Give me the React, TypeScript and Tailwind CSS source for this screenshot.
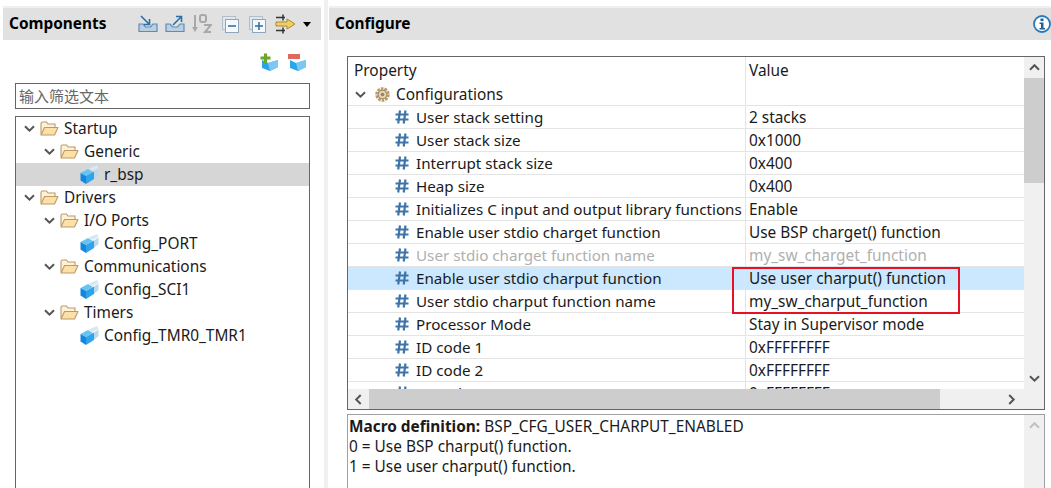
const uiFont = "font-['Noto_Sans','Noto_Sans_CJK_SC',sans-serif]";

const Chevron = ({ dir = "down", color = "#555" }: { dir?: "down" | "up" | "left" | "right"; color?: string }) => {
  const paths = {
    down: "M1 3.2 L5.5 7.7 L10 3.2",
    up: "M1 7.7 L5.5 3.2 L10 7.7",
    left: "M7.7 1 L3.2 5.5 L7.7 10",
    right: "M3.2 1 L7.7 5.5 L3.2 10",
  };
  return (
    <svg width="11" height="11" viewBox="0 0 11 11" className="shrink-0">
      <path d={paths[dir]} fill="none" stroke={color} strokeWidth="2" />
    </svg>
  );
};

const Folder = () => (
  <svg width="19" height="15" viewBox="0 0 19 15" className="shrink-0">
    <path d="M1 13 V2.5 Q1 1 2.5 1 H6.5 L8 3 H15 V6" fill="#fdf1d8" stroke="#bd9a66" strokeWidth="1.1" />
    <path d="M1 14 L4.5 6.5 H18 L14.5 14 Z" fill="#fbe0a8" stroke="#bd9a66" strokeWidth="1.1" strokeLinejoin="round" />
  </svg>
);

const Cube = () => (
  <svg width="19" height="19" viewBox="0 0 19 19" className="shrink-0">
    <path d="M0.5 8 L8 4 L13 7 L6 11 Z" fill="#66c4f2" />
    <path d="M0.5 8 L6 11 V19 L0.5 15.5 Z" fill="#1487dd" />
    <path d="M6 11 L14 6.5 V14 L6 19 Z" fill="#2fa3ec" />
    <path d="M8.5 3.5 L17 0 L18.5 3 L12.5 6 Z" fill="#d8e8f3" />
    <path d="M14 6.5 L18.5 3.5 V10 L14 14 Z" fill="#bcd9ec" />
  </svg>
);

const Hash = () => (
  <svg width="14" height="14" viewBox="0 0 14 14" className="shrink-0">
    <path d="M5 0.5 L3.2 13.5 M10.5 0.5 L8.7 13.5 M0.5 4.5 H13.5 M0.5 9.5 H13.5" fill="none" stroke="#3f74a8" strokeWidth="2.2" />
  </svg>
);

const Gear = () => (
  <svg width="15" height="15" viewBox="0 0 15 15" className="shrink-0">
    <circle cx="7.5" cy="7.5" r="6" fill="none" stroke="#b89a6c" strokeWidth="2.6" strokeDasharray="2.6 1.1" />
    <circle cx="7.5" cy="7.5" r="4.4" fill="#e3d3b0" stroke="#a5895e" strokeWidth="1.2" />
    <circle cx="7.5" cy="7.5" r="1.8" fill="#8e8474" />
  </svg>
);

const Tray = ({ out }: { out?: boolean }) => (
  <svg width="20" height="18" viewBox="0 0 20 18" className="shrink-0">
    <path d="M1 9 V16.5 H19 V9 H15 L12.5 12 H7.5 L5 9 Z" fill="#b9cfe4" stroke="#5f8bb5" strokeWidth="1.2" />
    {out ? (
      <path d="M8 10 L16 2 M11 1.5 H16.5 V7" fill="none" stroke="#2f6ea5" strokeWidth="1.6" />
    ) : (
      <path d="M3 1 L11 9 M11.5 4 V9.5 H6" fill="none" stroke="#2f6ea5" strokeWidth="1.6" />
    )}
  </svg>
);

const SortAz = () => (
  <svg width="20" height="20" viewBox="0 0 20 20" className="shrink-0">
    <path d="M3 1 V15" stroke="#a8a8a8" strokeWidth="2" />
    <path d="M0 13 H6 L3 18 Z" fill="#a8a8a8" />
    <rect x="8" y="1" width="6" height="7" rx="2" fill="none" stroke="#a8a8a8" strokeWidth="2" />
    <path d="M12 11 H19 L13 18 H19" fill="none" stroke="#a8a8a8" strokeWidth="2" />
  </svg>
);

const Collapse = ({ plus }: { plus?: boolean }) => (
  <svg width="17" height="17" viewBox="0 0 17 17" className="shrink-0">
    <rect x="0.5" y="0.5" width="13" height="13" fill="#dfe8f0" stroke="#b4bec8" />
    <rect x="3.5" y="3.5" width="13" height="13" fill="#f6f9fc" stroke="#8ea6bc" />
    <path d="M6 10 H14" stroke="#3f6f9f" strokeWidth="1.6" />
    {plus && <path d="M10 6 V14" stroke="#3f6f9f" strokeWidth="1.6" />}
  </svg>
);

const Filters = () => (
  <svg width="21" height="20" viewBox="0 0 21 20" className="shrink-0">
    <path d="M1 3.5 H10 M1 16.5 H10" stroke="#333" strokeWidth="1.5" />
    <path d="M8 0.5 V6.5 M8 13.5 V19.5" stroke="#333" strokeWidth="1.5" />
    <path d="M1 8 H12 V5 L20 10 L12 15 V12 H1 Z" fill="#f3cf5e" stroke="#a98a30" strokeWidth="1" />
  </svg>
);

const CubeBadge = ({ plus }: { plus?: boolean }) => (
  <svg width="18" height="18" viewBox="0 0 18 18" className="shrink-0">
    <path d="M2 7 L8 10 L18 7 V14 L10 18 L2 15 Z" fill="#2ba5ea" />
    <path d="M8 10 L18 7 V14 L10 18 Z" fill="#7cc8f2" />
    {plus ? (
      <path d="M5.5 0.5 V10 M0.5 5 H10.5" stroke="#6aa52c" strokeWidth="3.2" />
    ) : (
      <rect x="0" y="1" width="12" height="5" fill="#dd6a5c" />
    )}
  </svg>
);

const Info = () => (
  <svg width="18" height="18" viewBox="0 0 18 18" className="shrink-0">
    <circle cx="9" cy="9" r="8" fill="#fff" stroke="#2a78b5" strokeWidth="1.8" />
    <rect x="7.5" y="3.5" width="3" height="2.6" fill="#1c5f9a" />
    <path d="M6.5 7.5 H10.5 V13 H12 V14.5 H6.5 V13 H8 V9 H6.5 Z" fill="#1c5f9a" />
  </svg>
);

type TreeItem = { label: string; level: number; selected?: boolean };

const tree: TreeItem[] = [
  { label: "Startup", level: 0 },
  { label: "Generic", level: 1 },
  { label: "r_bsp", level: 2, selected: true },
  { label: "Drivers", level: 0 },
  { label: "I/O Ports", level: 1 },
  { label: "Config_PORT", level: 2 },
  { label: "Communications", level: 1 },
  { label: "Config_SCI1", level: 2 },
  { label: "Timers", level: 1 },
  { label: "Config_TMR0_TMR1", level: 2 },
];

const rows = [
  ["User stack setting", "2 stacks"],
  ["User stack size", "0x1000"],
  ["Interrupt stack size", "0x400"],
  ["Heap size", "0x400"],
  ["Initializes C input and output library functions", "Enable"],
  ["Enable user stdio charget function", "Use BSP charget() function"],
  ["User stdio charget function name", "my_sw_charget_function"],
  ["Enable user stdio charput function", "Use user charput() function"],
  ["User stdio charput function name", "my_sw_charput_function"],
  ["Processor Mode", "Stay in Supervisor mode"],
  ["ID code 1", "0xFFFFFFFF"],
  ["ID code 2", "0xFFFFFFFF"],
  ["ID code 3", "0xFFFFFFFF"],
];

const TreeRow = ({ item }: { item: TreeItem }) => (
  <div className={`flex h-[23px] items-center ${item.selected ? "bg-[#d6d6d6]" : ""}`}>
    {item.level === 0 && <div className="w-[8px] shrink-0" />}
    {item.level === 1 && <div className="w-[28px] shrink-0" />}
    {item.level === 2 && <div className="w-[64px] shrink-0" />}
    {item.level < 2 ? (
      <>
        <Chevron />
        <div className="w-[5px] shrink-0" />
        <Folder />
        <div className="w-[5px] shrink-0" />
      </>
    ) : (
      <>
        <Cube />
        <div className="w-[5px] shrink-0" />
      </>
    )}
    <span className="whitespace-nowrap">{item.label}</span>
  </div>
);

export default function App() {
  return (
    <div className={`relative flex h-[488px] w-[1051px] overflow-hidden bg-white text-[15.4px] leading-[20px] text-[#1a1a1a] ${uiFont}`}>
      {/* left view */}
      <div className="flex h-full w-[328px] shrink-0 flex-col border-r-[4px] border-[#f0f0f0] pl-[3px]">
        <div className="mr-[3px] mt-[6px] flex h-[34px] shrink-0 items-center border-t-2 border-[#f0f0f0] bg-[#e1e1e1] pl-[6px] pr-[10px]">
          <span className="font-bold text-black">Components</span>
          <div className="ml-auto flex items-center gap-[7px]">
            <Tray />
            <Tray out />
            <SortAz />
            <div className="ml-[3px]">
              <Collapse />
            </div>
            <div className="ml-[3px]">
              <Collapse plus />
            </div>
            <div className="ml-[2px]">
              <Filters />
            </div>
            <div className="h-0 w-0 border-x-[4.5px] border-t-[5px] border-x-transparent border-t-black" />
          </div>
        </div>
        <div className="flex h-[43px] shrink-0 items-end justify-end gap-[10px] pb-[12px] pr-[18px]">
          <CubeBadge plus />
          <CubeBadge />
        </div>
        <div className="ml-[12px] flex h-[26px] w-[295px] shrink-0 items-center border border-[#666] pl-[3px] text-[15px] text-[#666]">
          输入筛选文本
        </div>
        <div className="ml-[12px] mt-[7px] w-[295px] grow border border-b-0 border-[#666]">
          {tree.map((item) => (
            <TreeRow key={item.label} item={item} />
          ))}
        </div>
      </div>

      {/* right view */}
      <div className="flex h-full grow flex-col pl-[1px]">
        <div className="mt-[6px] flex h-[34px] shrink-0 items-center justify-between border-t-2 border-[#f0f0f0] bg-[#e1e1e1] pl-[6px]">
          <span className="font-bold text-black">Configure</span>
          <Info />
        </div>
        <div className="ml-[18px] mr-[6px] mt-[16px] flex h-[354px] shrink-0 flex-col border border-[#666]">
          <div className="flex min-h-0 grow">
            <div className="min-w-0 grow overflow-hidden">
              <div className="flex h-[26px] items-center">
                <div className="w-[397px] shrink-0 pl-[6px] pt-[2px]">Property</div>
                <div className="h-full grow border-l border-[#e4e4e4] pl-[3px] leading-[28px]">Value</div>
              </div>
              <div className="flex h-[23px] border-b border-[#e4e4e4]">
                <div className="flex w-[397px] shrink-0 items-center pl-[7px]">
                  <Chevron />
                  <div className="w-[9px]" />
                  <Gear />
                  <div className="w-[6px]" />
                  <span className="pt-[2px]">Configurations</span>
                </div>
                <div className="grow border-l border-[#e4e4e4]" />
              </div>
              {rows.map(([name, value], i) => (
                <div
                  key={name}
                  className={`flex h-[23px] border-b border-[#e4e4e4] ${i === 7 ? "bg-[#cce8ff]" : ""} ${i === 6 ? "text-[#b0b0b0]" : ""}`}
                >
                  <div className="flex w-[397px] shrink-0 items-center whitespace-nowrap pl-[47px]">
                    <Hash />
                    <div className="w-[7px] shrink-0" />
                    <span className="text-[15.2px]">{name}</span>
                  </div>
                  <div className="flex grow items-center whitespace-nowrap border-l border-[#e4e4e4] pl-[3px] pt-[2px]">{value}</div>
                </div>
              ))}
            </div>
            <div className="flex w-[20px] shrink-0 flex-col bg-[#f0f0f0]">
              <div className="flex h-[21px] items-center justify-center">
                <Chevron dir="up" />
              </div>
              <div className="h-[105px] bg-[#cdcdcd]" />
              <div className="flex grow items-end justify-center pb-[5px]">
                <Chevron dir="down" />
              </div>
            </div>
          </div>
          <div className="flex h-[20px] shrink-0 bg-[#f0f0f0]">
            <div className="flex w-[21px] items-center justify-center">
              <Chevron dir="left" />
            </div>
            <div className="w-[571px] bg-[#cdcdcd]" />
            <div className="flex grow items-center justify-end pr-[27px]">
              <Chevron dir="right" />
            </div>
          </div>
        </div>
        <div className="ml-[18px] mr-[6px] mt-[4px] flex grow border border-b-0 border-[#a0a0a0]">
          <div className="min-w-0 grow pl-[1px] pt-[2px]">
            <p>
              <b>Macro definition:</b> BSP_CFG_USER_CHARPUT_ENABLED
            </p>
            <p>0 = Use BSP charput() function.</p>
            <p>1 = Use user charput() function.</p>
          </div>
          <div className="flex w-[20px] shrink-0 justify-center bg-[#f0f0f0] pt-[5px]">
            <Chevron dir="up" color="#c0c0c0" />
          </div>
        </div>
      </div>

      {/* callout drawn over the table */}
      <div className="absolute left-[732px] top-[267px] h-[47px] w-[228px] border-2 border-[#e81123]" />
    </div>
  );
}
